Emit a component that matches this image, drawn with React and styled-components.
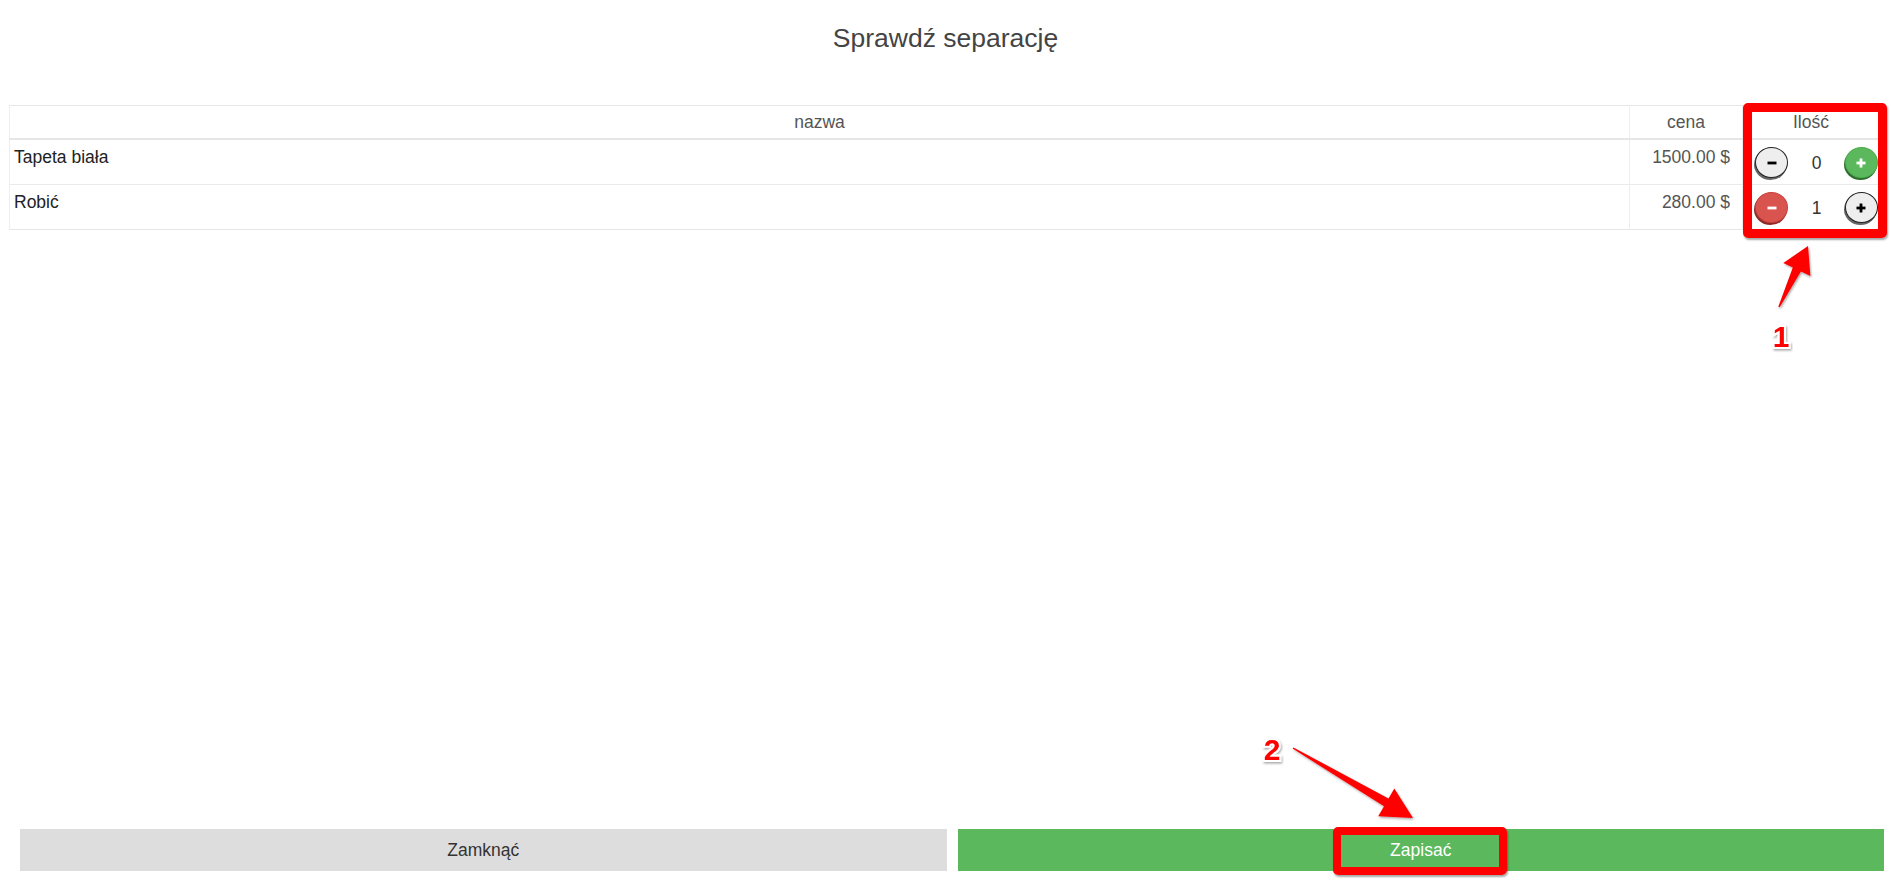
import React from "react";
import styled, { createGlobalStyle } from "styled-components";

const Global = createGlobalStyle`
  html, body { margin: 0; padding: 0; background: #fff; }
  body { font-family: "Liberation Sans", Arial, sans-serif; color: #333; }
`;

const Page = styled.div`
  position: relative;
  min-height: 100vh;
  display: flex;
  flex-direction: column;
  box-sizing: border-box;
`;

const Title = styled.h3`
  margin: 23px 0 0;
  font-size: 26.5px;
  font-weight: 400;
  line-height: 30px;
  text-align: center;
  color: #444;
`;

const TableWrap = styled.div`
  padding: 52px 11px 0 9px;
`;

const Table = styled.table`
  width: 100%;
  border-collapse: collapse;
  table-layout: fixed;
  border: 1px solid #e6e6e6;
  font-size: 17.5px;
  line-height: 24px;
`;

const Th = styled.th`
  font-weight: 400;
  color: #555;
  text-align: center;
  height: 32px;
  padding: 0;
  border-bottom: 2px solid #e6e6e6;
  border-left: 1px solid #eee;
`;

const Td = styled.td`
  vertical-align: top;
  padding: 5px ${(p) => (p.$right ? "12px" : "4px")} 0 4px;
  text-align: ${(p) => (p.$right ? "right" : "left")};
  color: ${(p) => (p.$right ? "#555" : "#222")};
  border-top: 1px solid #eaeaea;
  border-left: 1px solid #eee;
`;

const QtyCell = styled.td`
  padding: 7px 1px 6px 12px;
  border-top: 1px solid #eaeaea;
  border-left: 1px solid #eee;
`;

const Qty = styled.div`
  display: flex;
  align-items: center;
  justify-content: space-between;
  height: 31px;
`;

const Count = styled.span`
  color: #333;
  font-size: 17.5px;
`;

const variants = {
  default: { bg: "#eeeeee", border: "#222", fg: "#000", shadow: "rgba(0,0,0,0.6)" },
  success: { bg: "#5cb85c", border: "#4cae4c", fg: "#fff", shadow: "#2f6e2f" },
  danger: { bg: "#d9534f", border: "#c9403c", fg: "#fff", shadow: "#8a2b28" },
};

const Round = styled.button`
  width: 33px;
  height: 31px;
  border-radius: 50%;
  padding: 0;
  display: flex;
  align-items: center;
  justify-content: center;
  background: ${(p) => variants[p.$v].bg};
  color: ${(p) => variants[p.$v].fg};
  border: 1px solid ${(p) => variants[p.$v].border};
  box-shadow: -1px 2px 0 ${(p) => variants[p.$v].shadow};
  cursor: pointer;
`;

const Footer = styled.div`
  margin-top: auto;
  display: flex;
  gap: 11px;
  padding: 0 7px 9px 20px;
`;

const Btn = styled.button`
  flex: 1;
  height: 42px;
  border: none;
  border-radius: 0;
  font-family: "Liberation Sans", Arial, sans-serif;
  font-size: 17.5px;
  background: ${(p) => (p.$primary ? "#5cb85c" : "#dddddd")};
  color: ${(p) => (p.$primary ? "#fff" : "#333")};
`;

const Highlight = styled.div`
  position: absolute;
  left: ${(p) => p.$x}px;
  top: ${(p) => p.$y}px;
  width: ${(p) => p.$w}px;
  height: ${(p) => p.$h}px;
  box-sizing: border-box;
  border: ${(p) => p.$t}px solid #ff0000;
  border-radius: 5px;
  box-shadow: 1px 2px 2px rgba(0, 0, 0, 0.35);
  pointer-events: none;
`;

const Overlay = styled.svg`
  position: absolute;
  left: 0;
  top: 0;
  width: 1891px;
  height: 880px;
  pointer-events: none;
`;

const Label = styled.text`
  font-family: "Liberation Sans", Arial, sans-serif;
  font-weight: 700;
  font-size: 30px;
  fill: #ff0000;
  stroke: #fff;
  stroke-width: 4px;
  paint-order: stroke;
  text-anchor: middle;
`;

function arrowPoints(tail, tip, headLen, headW, shaftW, tailW) {
  const dx = tip[0] - tail[0];
  const dy = tip[1] - tail[1];
  const L = Math.hypot(dx, dy);
  const ux = dx / L, uy = dy / L;
  const nx = -uy, ny = ux;
  const base = [tip[0] - ux * headLen, tip[1] - uy * headLen];
  const p = (c, w) => [c[0] + nx * w, c[1] + ny * w];
  const pts = [
    p(tail, tailW / 2),
    p(base, shaftW / 2),
    p(base, headW / 2),
    tip,
    p(base, -headW / 2),
    p(base, -shaftW / 2),
    p(tail, -tailW / 2),
  ];
  return pts.map((q) => q[0].toFixed(1) + "," + q[1].toFixed(1)).join(" ");
}

const Minus = () => (
  <svg width="12" height="12" viewBox="0 0 12 12">
    <rect x="1.5" y="4.6" width="9" height="2.8" fill="currentColor" />
  </svg>
);

const Plus = () => (
  <svg width="12" height="12" viewBox="0 0 12 12">
    <rect x="1.5" y="4.6" width="9" height="2.8" fill="currentColor" />
    <rect x="4.6" y="1.5" width="2.8" height="9" fill="currentColor" />
  </svg>
);

const rows = [
  { name: "Tapeta biała", price: "1500.00 $", qty: 0 },
  { name: "Robić", price: "280.00 $", qty: 1 },
];

export default function App() {
  return (
    <Page>
      <Global />
      <Title>Sprawdź separację</Title>
      <TableWrap>
        <Table>
          <colgroup>
            <col />
            <col style={{ width: 113 }} />
            <col style={{ width: 137 }} />
          </colgroup>
          <thead>
            <tr>
              <Th>nazwa</Th>
              <Th>cena</Th>
              <Th>Ilość</Th>
            </tr>
          </thead>
          <tbody>
            {rows.map((r) => (
              <tr key={r.name}>
                <Td>{r.name}</Td>
                <Td $right>{r.price}</Td>
                <QtyCell>
                  <Qty>
                    <Round $v={r.qty > 0 ? "danger" : "default"}>
                      <Minus />
                    </Round>
                    <Count>{r.qty}</Count>
                    <Round $v={r.qty > 0 ? "default" : "success"}>
                      <Plus />
                    </Round>
                  </Qty>
                </QtyCell>
              </tr>
            ))}
          </tbody>
        </Table>
      </TableWrap>
      <Footer>
        <Btn>Zamknąć</Btn>
        <Btn $primary>Zapisać</Btn>
      </Footer>

      <Highlight $x={1743} $y={103} $w={144} $h={135} $t={9} />
      <Highlight $x={1333} $y={827} $w={174} $h={48} $t={8} />
      <Overlay viewBox="0 0 1891 880">
        <defs>
          <filter id="sh" x="-20%" y="-20%" width="140%" height="140%">
            <feDropShadow dx="1" dy="1.5" stdDeviation="0.8" floodColor="#000" floodOpacity="0.35" />
          </filter>
        </defs>
        <polygon
          points={arrowPoints([1779, 307], [1808, 246], 26, 30, 9, 1.5)}
          fill="#ff0000"
          filter="url(#sh)"
        />
        <polygon
          points={arrowPoints([1293, 748], [1413, 818], 31, 32, 9, 1.5)}
          fill="#ff0000"
          filter="url(#sh)"
        />
        <Label x="1781" y="347" filter="url(#sh)">1</Label>
        <Label x="1272" y="760" filter="url(#sh)">2</Label>
      </Overlay>
    </Page>
  );
}
